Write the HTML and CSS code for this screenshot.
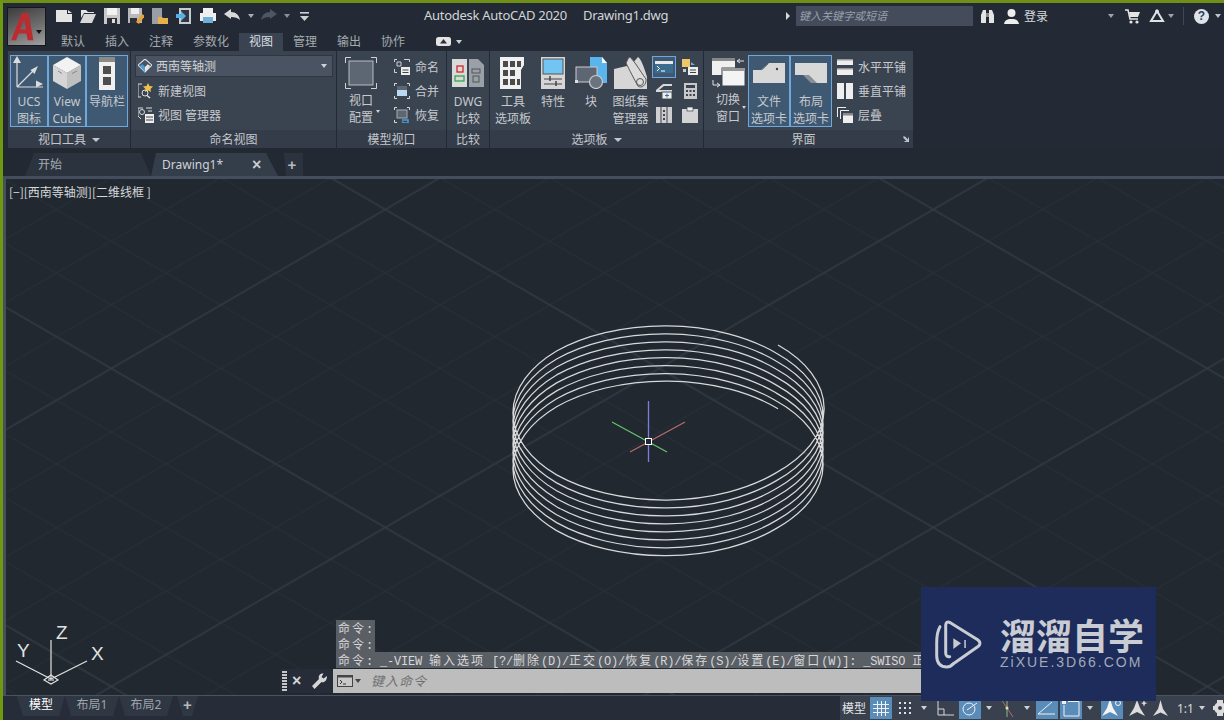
FILE: index.html
```html
<!DOCTYPE html>
<html lang="zh">
<head>
<meta charset="utf-8">
<title>Autodesk AutoCAD 2020</title>
<link rel="stylesheet" href="styles.css">
</head>
<body>
<div class="app">
  <header class="head">
    <button class="appbtn">
      <svg width="25" height="28" viewBox="0 0 30 34"><path d="M0 33 L13 0 H21 L27 33 H20 L18.5 25 H9 L6 33 Z M11 20 H18 L16 7 Z" fill="#bd2a30" fill-rule="evenodd"/></svg>
      <i class="caret appcaret"></i>
    </button>
    <div class="headcol">
      <div class="titlebar">
        <div class="qat">
          <svg width="16" height="16" viewBox="0 0 16 16"><path d="M0 2H11V6H16V14H0Z M12 2L16 5H12Z" fill="#e4e4e4"/></svg>
          <svg width="16" height="16" viewBox="0 0 16 16"><path d="M1 2H6L8 4H14V5H4L1 10Z" fill="#e4e4e4"/><path d="M4 6H16L12 15H0Z" fill="#d8d8d8"/></svg>
          <svg width="16" height="16" viewBox="0 0 16 16"><rect width="16" height="16" fill="#c9c9c9"/><rect x="3" width="10" height="7" fill="#f2f2f2"/><rect x="3" y="10" width="10" height="6" fill="#2a2f38"/><rect x="8" y="11" width="3" height="4" fill="#ddd"/></svg>
          <svg width="16" height="16" viewBox="0 0 16 16"><rect width="14" height="15" fill="#b9b9b9"/><rect x="3" width="8" height="6" fill="#efefef"/><rect x="2" y="10" width="7" height="5" fill="#2a2f38"/><path d="M8 14L14 6L17 8L11 16Z" fill="#e8a23a"/></svg>
          <svg width="16" height="16" viewBox="0 0 16 16"><rect x="0" y="0" width="10" height="16" fill="#9a9fa6"/><path d="M6 9H10L11 10H16V16H6Z" fill="#e6b04a"/></svg>
          <svg width="16" height="16" viewBox="0 0 16 16"><rect x="3" y="0" width="12" height="16" fill="#c6cbd0"/><rect x="5" y="2" width="8" height="12" fill="#2f3742"/><path d="M0 6H5V3L10 8L5 13V10H0Z" fill="#58b0e6"/></svg>
          <svg width="16" height="16" viewBox="0 0 16 16"><rect x="3" y="0" width="10" height="5" fill="#f0f0f0"/><rect x="0" y="5" width="16" height="8" fill="#eee"/><rect x="3" y="9" width="10" height="6" fill="#6fb0d8"/></svg>
          <svg width="17" height="16" viewBox="0 0 17 16"><path d="M0 6L7 1V4C12 4 15 7 16 12C14 10 11 9 7 9V11Z" fill="#d9d9d9"/></svg>
          <i class="caret qc1"></i>
          <svg class="redo" width="17" height="16" viewBox="0 0 17 16"><path d="M17 6L10 1V4C5 4 2 7 1 12C3 10 6 9 10 9V11Z" fill="#4d5663"/></svg>
          <i class="caret qc2"></i>
          <svg class="qmenu" width="9" height="9" viewBox="0 0 9 9"><rect y="0" width="9" height="1.6" fill="#cfcfcf"/><path d="M0 4H9L4.5 9Z" fill="#cfcfcf"/></svg>
        </div>
        <div class="title">Autodesk AutoCAD 2020<span class="docname">Drawing1.dwg</span></div>
        <div class="tbright">
          <i class="tri-right"></i>
          <div class="search">键入关键字或短语</div>
          <svg class="binoc" width="15" height="15" viewBox="0 0 15 15"><path d="M1 14V6L3 1H6V14Z M9 14V1H12L14 6V14Z" fill="#e4e4e4"/><rect x="6" y="4" width="3" height="4" fill="#8a8a8a"/></svg>
          <svg class="user" width="15" height="16" viewBox="0 0 15 16"><circle cx="7.5" cy="5" r="4" fill="#eee"/><path d="M0 16C1 11 5 11 7.5 11C10 11 14 11 15 16Z" fill="#eee"/></svg>
          <span class="login">登录</span>
          <i class="caret lc"></i>
          <svg class="cart" width="15" height="15" viewBox="0 0 15 15"><path d="M0 1H3L5 10H13" stroke="#e4e4e4" stroke-width="1.5" fill="none"/><path d="M4 3H15L13 8H5Z" fill="#e4e4e4"/><circle cx="6" cy="13" r="1.6" fill="#e4e4e4"/><circle cx="12" cy="13" r="1.6" fill="#e4e4e4"/></svg>
          <svg class="net" width="16" height="14" viewBox="0 0 16 14"><path d="M8 2L14 12H2Z" stroke="#dfe3e8" stroke-width="2" fill="none"/><circle cx="8" cy="2.5" r="2" fill="#dfe3e8"/></svg>
          <i class="caret nc"></i>
          <i class="divider"></i>
          <span class="help">?</span>
          <i class="caret hc"></i>
        </div>
      </div>
      <nav class="tabs">
        <span class="tab">默认</span><span class="tab">插入</span><span class="tab">注释</span><span class="tab">参数化</span><span class="tab on">视图</span><span class="tab">管理</span><span class="tab">输出</span><span class="tab">协作</span>
        <svg class="tabcam" width="15" height="9" viewBox="0 0 15 9"><rect width="15" height="9" rx="2.5" fill="#e4e4e4"/><path d="M7.5 2L11 6.5H4Z" fill="#2a303a"/></svg>
        <i class="caret tabc"></i>
      </nav>
    </div>
  </header>

  <section class="ribbon">
    <div class="panel p1">
      <div class="pbody">
        <div class="big hl w38">
          <div class="ico"><svg width="32" height="34" viewBox="0 0 32 34"><path d="M4 31V3M4 31L21 14M4 31H30" stroke="#dcdcdc" stroke-width="1.2" fill="none"/><path d="M4 0L8 7H0Z M30 28L23 31.5V24.5Z M25 10L21.5 18L17.5 14Z" fill="#dcdcdc" transform="translate(0 0)"/></svg></div>
          <div class="lab">UCS</div><div class="lab">图标</div>
        </div>
        <div class="big hl w38">
          <div class="ico"><svg width="30" height="34" viewBox="0 0 30 34"><path d="M15 1L29 9L15 17L1 9Z" fill="#f2f2f2"/><path d="M1 9L15 17V33L1 25Z" fill="#d5d5d5"/><path d="M29 9L15 17V33L29 25Z" fill="#bfbfbf"/><path d="M6 15L10 17.5M20 17.5L25 15" stroke="#888" stroke-width="1"/></svg></div>
          <div class="lab">View</div><div class="lab">Cube</div>
        </div>
        <div class="big hl w42">
          <div class="ico"><svg width="16" height="33" viewBox="0 0 16 33"><rect width="16" height="33" fill="#f0f0f0"/><rect width="16" height="5" fill="#8b8b86"/><rect x="4" y="9" width="8" height="8" fill="#4e4e4e"/><rect x="4" y="20" width="8" height="8" fill="#4e4e4e"/></svg></div>
          <div class="lab">导航栏</div>
        </div>
      </div>
      <div class="pfoot">视口工具<i class="caret fc"></i></div>
    </div>

    <div class="panel p2">
      <div class="pbody col">
        <div class="combo">
          <svg width="14" height="14" viewBox="0 0 16 16"><path d="M8 0L16 7L8 15L0 7Z" fill="none" stroke="#dfe3e8" stroke-width="1.2"/><path d="M2 8L8 15V9L5 6Z" fill="#4ba0dc"/><path d="M14 8L8 15V9L11 6Z" fill="#e6e6e6"/></svg>
          <span>西南等轴测</span><i class="caret cc"></i>
        </div>
        <div class="row r1">
          <svg width="16" height="16" viewBox="0 0 16 16"><path d="M4 1H0V14H3" stroke="#d8d8d8" fill="none"/><path d="M10 0L11.5 3L15 3.5L12.5 6L13 9L10 7.5L7 9L7.5 6L5 3.5L8.5 3Z" fill="#eec14a"/><circle cx="7" cy="10" r="3" stroke="#e0e0e0" fill="none"/><path d="M9 12.5L12 15" stroke="#e0e0e0" stroke-width="1.5"/></svg>
          <span>新建视图</span>
        </div>
        <div class="row r1">
          <svg width="16" height="16" viewBox="0 0 16 16"><path d="M5 1H0V9L3 12" stroke="#d8d8d8" fill="none"/><circle cx="4" cy="5" r="2.5" stroke="#d8d8d8" fill="none"/><rect x="7" y="7" width="9" height="9" fill="#eee"/><path d="M8 10H15M8 13H15" stroke="#444"/><path d="M8 1H14M10 4H14" stroke="#ddd"/></svg>
          <span>视图 管理器</span>
        </div>
      </div>
      <div class="pfoot">命名视图</div>
    </div>

    <div class="panel p3">
      <div class="pbody">
        <div class="big w42 rel">
          <div class="ico lift1"><svg width="32" height="32" viewBox="0 0 32 32"><rect x="4" y="4" width="24" height="24" fill="#5d6673" stroke="#b8bcc2"/><path d="M6 0.5H0.5V6M26 0.5H31.5V6M6 31.5H0.5V26M26 31.5H31.5V26" stroke="#cfd2d6" fill="none"/></svg></div>
          <div class="lab">视口</div><div class="lab">配置</div>
          <i class="caret bc"></i>
        </div>
        <div class="rows ml12">
          <div class="row r2"><svg width="16" height="16" viewBox="0 0 16 16"><path d="M3 .5H.5V3M10 .5H15.5V3M3 13.5H.5V10" stroke="#d0d0d0" fill="none"/><path d="M3 3H7V7H3Z" stroke="#d0d0d0" fill="none"/><rect x="7" y="8" width="9" height="8" fill="#eee"/><path d="M8.5 11H14.5M8.5 13.5H14.5" stroke="#444"/></svg><span>命名</span></div>
          <div class="row r2"><svg width="16" height="16" viewBox="0 0 16 16"><path d="M3 .5H.5V3M13 .5H15.5V3M3 15.5H.5V13M13 15.5H15.5V13" stroke="#d8d8d8" fill="none"/><rect x="3" y="3" width="10" height="10" fill="#b9d9f2"/><rect x="3" y="3" width="10" height="4" fill="#5d6673"/></svg><span>合并</span></div>
          <div class="row r2"><svg width="16" height="16" viewBox="0 0 16 16"><path d="M3 .5H.5V3M13 .5H15.5V3M3 15.5H.5V13" stroke="#d8d8d8" fill="none"/><rect x="3" y="3" width="10" height="8" fill="#5d6673" stroke="#aaa"/><path d="M8 13H14V16H10L8 14.5" stroke="#4ba0dc" stroke-width="1.5" fill="none"/></svg><span>恢复</span></div>
        </div>
      </div>
      <div class="pfoot">模型视口</div>
    </div>

    <div class="panel p4">
      <div class="pbody">
        <div class="big w42">
          <div class="ico"><svg width="32" height="28" viewBox="0 0 32 28"><rect x="0" y="0" width="15" height="28" fill="#d9d9d9"/><path d="M17 0H26L32 6V28H17Z" fill="#9aa0a8"/><rect x="5" y="7" width="6" height="6" fill="none" stroke="#d3262d" stroke-width="1.3"/><rect x="3" y="17" width="9" height="5" fill="none" stroke="#2ea84a" stroke-width="1.3"/><rect x="20" y="10" width="8" height="4" fill="none" stroke="#555"/><rect x="21" y="17" width="6" height="6" fill="none" stroke="#555"/></svg></div>
          <div class="lab">DWG</div><div class="lab">比较</div>
        </div>
      </div>
      <div class="pfoot">比较</div>
    </div>

    <div class="panel p5">
      <div class="pbody">
        <div class="big w38">
          <div class="ico"><svg width="26" height="32" viewBox="0 0 26 32"><path d="M0 0H24V8L21 13V32H0Z" fill="#f0f0f0"/><g fill="#4a4a4a"><rect x="3" y="4" width="5" height="6"/><rect x="10" y="4" width="5" height="6"/><rect x="17" y="4" width="4" height="6"/><rect x="3" y="13" width="5" height="6"/><rect x="10" y="13" width="5" height="6"/><rect x="3" y="22" width="5" height="6"/><rect x="10" y="22" width="5" height="6"/><rect x="17" y="22" width="3" height="6"/></g></svg></div>
          <div class="lab">工具</div><div class="lab">选项板</div>
        </div>
        <div class="big w42">
          <div class="ico"><svg width="24" height="32" viewBox="0 0 24 32"><rect width="24" height="32" fill="#d6d6d6"/><rect x="2" y="2" width="20" height="15" fill="#72c5f2" stroke="#555"/><path d="M3 22H21M3 27H21" stroke="#444"/><path d="M9 19V24M15 24V29" stroke="#444" stroke-width="1.5"/></svg></div>
          <div class="lab">特性</div>
        </div>
        <div class="big w34">
          <div class="ico"><svg width="32" height="32" viewBox="0 0 32 32"><path d="M15 0H27L32 6V26H15Z" fill="#5ab4ee"/><path d="M27 0V6H32Z" fill="#fff"/><rect x="1" y="10" width="21" height="15" fill="#5d6673" stroke="#ccc"/><circle cx="21" cy="25" r="6.5" fill="#6a7380" stroke="#ccc" stroke-width="1.2"/><rect x="0" y="23" width="3" height="3" fill="#ddd"/></svg></div>
          <div class="lab">块</div>
        </div>
        <div class="big w45">
          <div class="ico"><svg width="33" height="32" viewBox="0 0 33 32"><path d="M0 12L17 8L24 0C27 2 30 10 33 20V32H0Z" fill="#d6d6d6"/><path d="M15 0C18 0 26 14 32 22C33 28 27 32 24 29C21 24 15 12 12 6Z" fill="#dcdcdc" stroke="#555"/><circle cx="26" cy="25" r="3.5" fill="none" stroke="#555"/></svg></div>
          <div class="lab">图纸集</div><div class="lab">管理器</div>
        </div>
        <div class="smallgrid">
          <div class="sg hlbox"><svg width="18" height="12" viewBox="0 0 18 12"><rect width="18" height="12" fill="#e8e8e8"/><rect y="3" width="18" height="9" fill="#3b6d8f"/><path d="M2 5L4.5 7.5L2 10M6 10H10" stroke="#fff" fill="none"/></svg></div>
          <div class="sg"><svg width="16" height="16" viewBox="0 0 16 16"><rect x="0" y="0" width="8" height="8" fill="#eec66a"/><path d="M9 3L13 6H9Z" fill="#5ab4ee"/><rect x="6" y="8" width="10" height="8" fill="#eee"/><path d="M8 11H14M8 13.5H14" stroke="#444"/><path d="M1 10H4V13H1Z" fill="#ccc"/></svg></div>
          <div class="sg"><svg width="16" height="16" viewBox="0 0 16 16"><path d="M0 7L7 1H16V3H8L3 7H16V9H0Z" fill="#d8d8d8"/><rect x="6" y="9" width="10" height="7" fill="#eee" stroke="#555"/><path d="M9 12.5H13M11 10.5V14.5" stroke="#2a72b8"/></svg></div>
          <div class="sg"><svg width="13" height="16" viewBox="0 0 13 16"><rect width="13" height="16" fill="#c9c9c9"/><rect x="2" y="2" width="9" height="3" fill="#3c4450"/><g fill="#3c4450"><rect x="2" y="7" width="2" height="2"/><rect x="5.5" y="7" width="2" height="2"/><rect x="9" y="7" width="2" height="2"/><rect x="2" y="11" width="2" height="2"/><rect x="5.5" y="11" width="2" height="2"/><rect x="9" y="11" width="2" height="2"/></g></svg></div>
          <div class="sg"><svg width="16" height="16" viewBox="0 0 16 16"><rect width="16" height="16" fill="#cfcfcf"/><path d="M5 0V16M11 0V16" stroke="#3c4450"/><g fill="#3c4450"><rect x="7" y="3" width="2" height="2"/><rect x="7" y="7" width="2" height="2"/><rect x="7" y="11" width="2" height="2"/></g></svg></div>
          <div class="sg"><svg width="16" height="16" viewBox="0 0 16 16"><rect y="2" width="16" height="14" fill="#d4d4d4"/><rect x="5" y="0" width="6" height="4" fill="#efefef" stroke="#3c4450" stroke-width=".7"/></svg></div>
        </div>
      </div>
      <div class="pfoot">选项板<i class="caret fc"></i></div>
    </div>

    <div class="panel p6">
      <div class="pbody">
        <div class="big w38 rel">
          <div class="ico lift2"><svg width="33" height="30" viewBox="0 0 33 30"><rect x="0" y="0" width="23" height="17" fill="#f0f0f0"/><rect x="0" y="0" width="23" height="3" fill="#888"/><rect x="10" y="10" width="23" height="18" fill="#f4f4f4" stroke="#3c4450"/><rect x="10" y="10" width="23" height="3" fill="#999"/><path d="M32 3H26M28 1L25 3L28 5M1 22V27H7M5 25L8 27L5 29" stroke="#e0e0e0" fill="none"/></svg></div>
          <div class="lab">切换</div><div class="lab">窗口</div>
          <i class="caret bc2"></i>
        </div>
        <div class="big hl w42 ml1">
          <div class="ico"><svg width="32" height="20" viewBox="0 0 32 20"><path d="M0 20V7H9L16 0H32V20Z" fill="#d8d8d8"/><circle cx="24" cy="6" r="1.2" fill="#444"/><path d="M8 7L15 1" stroke="#777"/></svg></div>
          <div class="lab">文件</div><div class="lab">选项卡</div>
        </div>
        <div class="big hl w42">
          <div class="ico"><svg width="32" height="20" viewBox="0 0 32 20"><path d="M0 0H32V20H18L10 12H0Z" fill="#d8d8d8"/><path d="M8 12L16 20H22L14 12Z" fill="#8a8f96"/></svg></div>
          <div class="lab">布局</div><div class="lab">选项卡</div>
        </div>
        <div class="rows ml5">
          <div class="row r2"><svg width="16" height="16" viewBox="0 0 16 16"><rect y="0" width="16" height="6" fill="#eee"/><rect y="0" width="16" height="1.5" fill="#999"/><rect y="9" width="16" height="7" fill="#eee"/><rect y="9" width="16" height="1.5" fill="#999"/></svg><span>水平平铺</span></div>
          <div class="row r2"><svg width="16" height="16" viewBox="0 0 16 16"><rect x="0" width="7" height="16" fill="#eee"/><rect x="9" width="7" height="16" fill="#eee"/></svg><span>垂直平铺</span></div>
          <div class="row r2"><svg width="16" height="16" viewBox="0 0 16 16"><path d="M.5 10V.5H9M3.5 12V3.5H12" stroke="#eee" fill="none"/><rect x="6" y="6" width="10" height="10" fill="#eee"/><rect x="6" y="6" width="10" height="2.5" fill="#888"/></svg><span>层叠</span></div>
        </div>
      </div>
      <div class="pfoot f6">界面<svg class="launch" width="6" height="6" viewBox="0 0 6 6"><path d="M0 .5H2L5 3.5V1.5H6V6H1.5V5H3.5L.5 2Z" fill="#bfc3c8"/></svg></div>
    </div>
  </section>

  <div class="doctabs">
    <div class="dtab dt1">开始</div>
    <div class="dtab dt2"><span>Drawing1*</span><b class="dclose">×</b></div>
    <div class="dtab dt3">+</div>
  </div>

  <main class="viewport">
    <svg class="canvas" viewBox="6 179 1218 516" preserveAspectRatio="none">
      <defs>
        <pattern id="minor" width="109.6" height="63.6" patternUnits="userSpaceOnUse" patternTransform="translate(385.3 209.5)">
          <path d="M0 0L109.6 63.6M0 63.6L109.6 0" stroke="#272f39" stroke-width="1" fill="none"/>
        </pattern>
        <pattern id="major" width="548" height="318" patternUnits="userSpaceOnUse" patternTransform="translate(385.3 209.5)">
          <path d="M0 0L548 318M0 318L548 0" stroke="#333b46" stroke-width="1.2" fill="none"/>
        </pattern>
      </defs>
      <rect x="6" y="179" width="1218" height="516" fill="url(#minor)"/>
      <rect x="6" y="179" width="1218" height="516" fill="url(#major)"/>
      <path class="helix" d="M778 345.07
        a155 89 0 0 1 -2 127.82 a155 89 0 0 1 -219.4 1.99 a155 89 0 0 1 0 -123.84 a155 89 0 0 1 219.4 1.99
        a155 89 0 0 1 0 127.82 a155 89 0 0 1 -219.4 1.99 a155 89 0 0 1 0 -123.84 a155 89 0 0 1 219.4 1.99
        a155 89 0 0 1 0 127.82 a155 89 0 0 1 -219.4 1.99 a155 89 0 0 1 0 -123.84 a155 89 0 0 1 219.4 1.99
        a155 89 0 0 1 0 127.82 a155 89 0 0 1 -219.4 1.99 a155 89 0 0 1 0 -123.84 a155 89 0 0 1 219.4 1.99
        a155 89 0 0 1 0 127.82 a155 89 0 0 1 -219.4 1.99 a155 89 0 0 1 0 -123.84 a155 89 0 0 1 219.4 1.99
        a155 89 0 0 1 0 127.82 a155 89 0 0 1 -219.4 1.99 a155 89 0 0 1 0 -123.84 a155 89 0 0 1 219.4 1.99
        a155 89 0 0 1 0 127.82 a155 89 0 0 1 -219.4 1.99 a155 89 0 0 1 0 -123.84 a155 89 0 0 1 219.4 1.99
        a155 89 0 0 1 0 127.82 a155 89 0 0 1 -219.4 1.99 a155 89 0 0 1 0 -123.84 a155 89 0 0 1 221.4 1.99"/>
      <path d="M648.5 401V462" stroke="#7d7de0" stroke-width="1.3"/>
      <path d="M612 422L667 452" stroke="#62c46c" stroke-width="1.3"/>
      <path d="M685 422L630 452" stroke="#b86c6c" stroke-width="1.3"/>
      <rect x="645.500" y="438.500" width="6" height="6" fill="#212830" stroke="#fff" stroke-width="1"/>
      <g class="ucs">
        <path d="M51 679V640M51 679L16 661M51 679L87 661"/>
        <path d="M51 675L58 680L51 684L44 680Z"/>
        <path d="M48 680H54"/>
        <text x="56" y="639">Z</text>
        <text x="17" y="657">Y</text>
        <text x="91" y="660">X</text>
      </g>
    </svg>
    <div class="vplabel">[−][西南等轴测][二维线框 ]</div>
    <div class="cmd">
      <div class="hist">
        <div class="hline"><span class="cj">命令</span>:</div>
        <div class="hline"><span class="cj">命令</span>:</div>
        <div class="hline wide"><span class="cj">命令</span>: _-VIEW <span class="cj">输入选项</span> [?/<span class="cj">删除</span>(D)/<span class="cj">正交</span>(O)/<span class="cj">恢复</span>(R)/<span class="cj">保存</span>(S)/<span class="cj">设置</span>(E)/<span class="cj">窗口</span>(W)]: _SWISO <span class="cj">正</span></div>
      </div>
      <div class="cmdrow">
        <div class="cmdtools">
          <i class="grip"></i>
          <span class="cx">×</span>
          <svg class="wrench" width="15" height="16" viewBox="0 0 15 16"><path d="M15 3L11.5 5.5L9.5 4L11.5 0.5C8 0 6 3 7 6L0 13L2.5 16L9.5 9C12 10 15 8 15 3Z" fill="#d6d6d6"/></svg>
        </div>
        <div class="cmdinput">
          <svg width="16" height="12" viewBox="0 0 16 12"><rect x=".5" y=".5" width="15" height="11" fill="#c8c8c8" stroke="#444"/><rect x=".5" y=".5" width="15" height="2" fill="#444"/><path d="M3 5L5 7L3 9M6 9H9" stroke="#333" fill="none"/></svg>
          <i class="caret cmdcaret"></i>
          <span class="ph">键入命令</span>
        </div>
      </div>
    </div>
  </main>

  <footer class="status">
    <div class="stabs">
      <span class="stab first on">模型</span><span class="stab">布局1</span><span class="stab">布局2</span><span class="stab plus">+</span>
    </div>
    <div class="sright">
      <span class="smodel">模型</span>
      <span class="sb hl2 ml4"><svg width="16" height="16" viewBox="0 0 16 16"><path d="M0 4.5H16M0 8.5H16M0 12.5H16M4.5 1V16M8.5 1V16M12.5 1V16" stroke="#f0f0f0"/></svg></span>
      <svg class="ml6" width="14" height="14" viewBox="0 0 14 14"><g fill="#e0e0e0"><rect x="1" y="1" width="2" height="2"/><rect x="6" y="1" width="2" height="2"/><rect x="11" y="1" width="2" height="2"/><rect x="1" y="6" width="2" height="2"/><rect x="6" y="6" width="2" height="2"/><rect x="11" y="6" width="2" height="2"/><rect x="1" y="11" width="2" height="2"/><rect x="6" y="11" width="2" height="2"/><rect x="11" y="11" width="2" height="2"/></g></svg>
      <i class="caret ml9"></i>
      <svg class="ml10" width="17" height="16" viewBox="0 0 17 16"><path d="M1 0V15H17M1 9H7V15" stroke="#d8d8d8" fill="none"/></svg>
      <span class="sb hl2 ml5"><svg width="18" height="16" viewBox="0 0 18 16"><circle cx="8" cy="9" r="6" stroke="#f0f0f0" fill="none"/><path d="M6 10L16 3" stroke="#f0f0f0"/></svg></span>
      <i class="caret ml5"></i>
      <svg class="ml8" width="14" height="18" viewBox="0 0 14 18"><path d="M1 0L13 18" stroke="#b86c6c"/><path d="M7 0V18" stroke="#8fb88f"/><circle cx="7" cy="9" r="1.5" fill="#e4e4a0"/></svg>
      <i class="caret ml10"></i>
      <span class="sb hl2 ml6"><svg width="18" height="14" viewBox="0 0 18 14"><path d="M0 13H17M0 13L14 1" stroke="#f0f0f0" fill="none"/></svg></span>
      <span class="sb hl2 ml2"><svg width="18" height="17" viewBox="0 0 18 17"><path d="M6 1.500H17V16H2V5" stroke="#f0f0f0" fill="none"/><rect x="0" y="0" width="4" height="4" fill="#f0f0f0"/></svg></span>
      <i class="caret ml5"></i>
      <span class="sb hl2 ml8"><svg width="20" height="18" viewBox="0 0 20 18"><path d="M8 0L11 9L16 17L8 13L0 17L5 9Z" fill="#f4f4f4"/><circle cx="16" cy="4" r="2.5" fill="none" stroke="#f4f4f4"/></svg></span>
      <svg class="ml6" width="19" height="18" viewBox="0 0 19 18"><path d="M8 1L11 9L16 17L8 13L0 17L5 9Z" fill="#dcdcdc"/><path d="M15 1L16 3.500L18.500 4L16 5L15 7.500L14 5L12 4L14 3.500Z" fill="#dcdcdc"/></svg>
      <svg class="ml5" width="15" height="17" viewBox="0 0 15 17"><path d="M7.500 0L10 9L15 16L7.500 12.500L0 16L5 9Z" fill="#dcdcdc"/></svg>
      <span class="scale">1:1</span>
      <i class="caret ml6"></i>
      <svg class="ml6" width="14" height="16" viewBox="0 0 14 16"><circle cx="9" cy="8" r="6" fill="#dcdcdc"/><circle cx="9" cy="8" r="2" fill="#39414e"/><path d="M6 0H12V3H6ZM6 13H12V16H6ZM2 6H5V10H2Z" fill="#dcdcdc"/></svg>
    </div>
  </footer>

  <aside class="mark">
    <svg class="marklogo" width="48" height="52" viewBox="0 0 48 52">
      <path d="M14.700 36.700Q10.700 37 10.700 33V5Q11 1 15 2.500L43 20Q47 23.300 43 26.500L18 44" fill="none" stroke="#c9ccd2" stroke-width="3" stroke-linecap="round"/>
      <path d="M5 6.700Q1.700 12 1.700 23V36Q2 47 12 47Q15.500 47 18 44" fill="none" stroke="#c9ccd2" stroke-width="3" stroke-linecap="round"/>
      <path d="M18.300 18.300L26 23.300L18.300 29Z" fill="#c9ccd2"/>
      <rect x="29.300" y="20" width="1.500" height="8" fill="#c9ccd2"/>
    </svg>
    <div class="marktext">
      <div class="markcn">溜溜自学</div>
      <div class="markurl">ZiXUE.3D66.COM</div>
    </div>
  </aside>
</div>
</body>
</html>
```
FILE: styles.css
```css
* { box-sizing: border-box; }
html, body { margin: 0; padding: 0; }
body { width: 1224px; height: 720px; overflow: hidden; background: #222933; }
i { display: block; font-style: normal; }
svg { display: block; flex: none; }

.app {
  position: relative;
  width: 1224px;
  height: 720px;
  display: flex;
  flex-direction: column;
  border-top: 3px solid #6f8f17;
  border-left: 3px solid #6f9a0f;
  background: #232a35;
  color: #c6cace;
  font: 12px/17px "Noto Sans", "Noto Sans CJK SC", sans-serif;
  overflow: hidden;
}

.caret {
  width: 0;
  height: 0;
  flex: none;
  border-left: 3.5px solid transparent;
  border-right: 3.5px solid transparent;
  border-top: 4px solid #cdd0d4;
}

/* head */
.head { display: flex; height: 48px; padding-left: 4px; flex: none; }
.appbtn {
  position: relative;
  flex: none;
  width: 39px;
  height: 39px;
  margin-top: 4px;
  padding: 1px 0 0 3px;
  border: 1px solid #14171c;
  background: linear-gradient(160deg, #3c3c3c 0%, #6e6e6e 55%, #a0a0a0 100%);
}
.appcaret { position: absolute; right: 3px; top: 22px; border-top-color: #111; }
.headcol { flex: 1; min-width: 0; display: flex; flex-direction: column; }
.titlebar { display: flex; height: 26px; align-items: center; }
.qat { width: 378px; padding-left: 10px; display: flex; align-items: center; gap: 8px; flex: none; }
.qc1 { margin-left: -1px; border-top-color: #a9adb2; border-left-width: 3px; border-right-width: 3px; }
.redo { margin-left: -2px; }
.qc2 { margin-left: -1px; border-top-color: #8a9099; border-left-width: 3px; border-right-width: 3px; }
.qmenu { margin-left: 2px; }
.title { font-size: 13px; color: #d2d5d8; white-space: nowrap; letter-spacing: -0.28px; margin-top: -2px; }
.docname { margin-left: 16px; }
.tbright { margin-left: auto; width: 438px; display: flex; align-items: center; flex: none; }
.tri-right {
  width: 0; height: 0; flex: none; margin-right: 6px;
  border-top: 4px solid transparent; border-bottom: 4px solid transparent; border-left: 4px solid #d5d8dc;
}
.search {
  width: 177px; height: 20px; padding-left: 3px;
  background: #444c5c; color: #98a0ac; font-size: 11px; line-height: 20px; font-style: italic;
}
.binoc { margin-left: 7px; }
.user { margin-left: 9px; }
.login { margin-left: 5px; width: 24px; color: #d6d9dc; }
.lc { margin-left: 60px; border-top-color: #9ea3a9; }
.cart { margin-left: 11px; }
.net { margin-left: 9px; }
.nc { margin-left: 3px; border-top-color: #9ea3a9; }
.divider { margin-left: 9px; width: 1px; height: 18px; background: #3f4753; }
.help {
  margin-left: 10px; width: 15px; height: 15px; border-radius: 50%;
  background: #dfe3e8; color: #2a3f66; text-align: center; font: bold 12px/15px "Liberation Sans", sans-serif;
}
.hc { margin-left: 6px; border-top-color: #c0c3c8; }

.tabs { display: flex; height: 22px; padding-left: 5px; align-items: flex-end; }
.tab { height: 18px; padding: 0 10px; line-height: 17px; color: #a5aaaf; }
.tab.on { background: #3a4351; color: #dadde0; }
.tabcam { margin: 0 0 5px 21px; }
.tabc { margin: 0 0 7px 5px; }

/* ribbon */
.ribbon { display: flex; gap: 1px; height: 97px; margin-left: 5px; flex: none; }
.panel { display: flex; flex-direction: column; background: #3a4350; }
.p1 { width: 122px; }
.p2 { width: 205px; }
.p3 { width: 109px; }
.p4 { width: 42px; }
.p5 { width: 213px; }
.p6 { width: 209px; }
.pbody { height: 79px; padding-top: 4px; display: flex; flex: none; }
.pbody.col { flex-direction: column; padding-left: 4px; }
.p1 .pbody { padding-left: 2px; }
.p3 .pbody { padding-left: 3px; }
.p5 .pbody { padding-left: 4px; }
.p6 .pbody { padding-left: 5px; }
.pfoot {
  position: relative;
  height: 18px; padding-top: 2px; display: flex; justify-content: center; align-items: center; gap: 6px;
  background: #343c49; color: #c3c7cc; line-height: 16px;
}
.f6 { padding-right: 10px; }
.launch { position: absolute; right: 4px; bottom: 6px; }
.fc { border-top-color: #c3c7cc; border-left-width: 4px; border-right-width: 4px; }

.big { height: 72px; border: 1px solid transparent; display: flex; flex-direction: column; align-items: center; flex: none; overflow: hidden; }
.big.hl { border-color: #6ea8dc; background: #3f5972; }
.rel { position: relative; }
.ico { height: 37px; display: flex; align-items: center; justify-content: center; flex: none; padding-bottom: 3px; }
.lift1 { height: 36px; padding-bottom: 2px; }
.lift2 { height: 35px; padding-bottom: 1px; }
.lab { line-height: 17px; height: 17px; white-space: nowrap; flex: none; }
.w34 { width: 34px; }
.w38 { width: 38px; }
.w42 { width: 42px; }
.w45 { width: 45px; }
.bc { position: absolute; right: 1px; top: 54px; border-left-width: 2.5px; border-right-width: 2.5px; border-top-width: 3px; }
.bc2 { position: absolute; right: 0; top: 50px; border-left-width: 2.5px; border-right-width: 2.5px; border-top-width: 3px; }

.combo {
  width: 198px; height: 22px; padding: 0 4px 0 2px; display: flex; align-items: center; gap: 4px;
  background: #4a5362; border: 1px solid #2f3641; color: #d0d3d7;
}
.cc { margin-left: auto; margin-right: 1px; }
.row { display: flex; align-items: center; height: 24px; white-space: nowrap; }
.r1 { gap: 4px; padding-left: 3px; }
.combo + .row { margin-top: 2px; }
.r2 { gap: 5px; }
.rows { display: flex; flex-direction: column; }
.ml12 { margin-left: 12px; }
.ml1 { margin-left: 1px; }
.smallgrid { display: grid; grid-template-columns: 24px 20px; grid-auto-rows: 24px; column-gap: 4px; height: 72px; margin-left: -1px; }
.sg { display: flex; align-items: center; justify-content: center; }
.sg.hlbox { border: 1px solid #6ea8dc; background: #3f5972; height: 22px; margin-top: 1px; }

/* document tabs */
.doctabs {
  display: flex; height: 28px; padding: 5px 0 0 22px; flex: none; background: #222933;
}
.dtab { height: 23px; display: flex; align-items: center; }
.dt1 {
  width: 126px; padding-left: 13px; background: #2b333f; color: #a5aaaf;
  clip-path: polygon(9px 0, calc(100% - 10px) 0, 100% 100%, 0 100%);
}
.dt2 {
  width: 127px; padding-left: 11px; background: #343d4a; color: #cfd2d6;
  clip-path: polygon(5px 0, calc(100% - 12px) 0, 100% 100%, 0 100%);
}
.dt2 span { width: 90px; }
.dclose { color: #c8ccd0; font: bold 16px/16px "Liberation Sans", sans-serif; }
.dt3 {
  width: 22px; margin-left: 3px; justify-content: center; background: #2b333f; color: #b5b9be;
  font: bold 15px/20px "Liberation Sans", sans-serif;
  clip-path: polygon(3px 0, 100% 0, 100% 100%, 5px 100%);
}

/* viewport */
.viewport {
  position: relative;
  flex: 1;
  min-height: 0;
  background: #212830;
  border-top: 3px solid #444d5d;
  border-left: 3px solid #46505c;
}
.canvas { position: absolute; left: 0; top: 0; width: 100%; height: 100%; }
.helix { fill: none; stroke: #d8d8d8; stroke-width: 1.25; }
.ucs path { fill: none; stroke: #e2e2e2; stroke-width: 1.2; }
.ucs text { fill: #e2e2e2; font: 19px "Liberation Sans", sans-serif; }
.vplabel {
  position: absolute; left: 3px; top: 4px; color: #d6d8da; font-size: 12px; line-height: 17px;
  font-family: "Noto Sans CJK SC", sans-serif; white-space: nowrap;
}
.cmd { position: absolute; left: 274px; bottom: 2px; width: 641px; }
.hist { margin-left: 56px; display: flex; flex-direction: column; align-items: flex-start; }
.hline {
  height: 16px; padding: 0 2px; background: #5a5f66; color: #d8d8d8;
  font: 12px/15px "Liberation Mono", "Noto Sans CJK SC", monospace; white-space: pre; letter-spacing: -0.2px;
}
.hline.wide { width: 585px; }
.cj { display: inline-block; height: 15px; font-size: 12px; line-height: 15px; letter-spacing: 2px; font-family: "Noto Sans CJK SC", sans-serif; }
.cmdrow { display: flex; height: 24px; margin-top: 1px; }
.cmdtools { width: 53px; display: flex; align-items: center; background: #262d38; flex: none; padding-left: 2px; }
.grip {
  width: 5px; height: 20px;
  background: repeating-linear-gradient(#c8c8c8 0 2px, transparent 2px 3px);
}
.cx { margin-left: 5px; color: #d6d6d6; font: bold 16px/16px "Liberation Sans", sans-serif; width: 10px; }
.wrench { margin-left: 10px; }
.cmdinput { flex: 1; display: flex; align-items: center; padding-left: 4px; background: #bdbdbd; }
.cmdcaret { margin-left: 2px; border-top-color: #444; }
.ph { margin-left: 10px; color: #707070; font-size: 13px; font-style: italic; letter-spacing: 1px; }

/* status bar */
.status {
  height: 25px; flex: none; display: flex; background: #262d38; border-top: 1px solid #4a5360;
}
.stabs { display: flex; padding-left: 14px; align-items: flex-start; }
.stab {
  height: 20px; width: 54px; text-align: center; line-height: 18px; color: #a0a5ab;
  background: #2f3743;
  clip-path: polygon(0 0, 100% 0, calc(100% - 6px) 100%, 6px 100%);
}
.stab.first { width: 48px; }
.stab.on { color: #fff; background: #303844; }
.stab.plus { width: 21px; margin-left: 4px; font: bold 15px/17px "Liberation Sans", sans-serif; color: #b5b9be; }
.sright {
  margin-left: auto; width: 384px; display: flex; align-items: center; background: #39414e; padding-left: 2px; flex: none;
}
.smodel { color: #e2e4e6; width: 24px; flex: none; }
.sb { width: 22px; height: 22px; display: flex; align-items: center; justify-content: center; flex: none; }
.hl2 { background: #5a8cb9; }
.scale { margin-left: 9px; width: 16px; color: #d8dadd; flex: none; }
.ml2 { margin-left: 2px; }
.ml4 { margin-left: 4px; }
.ml5 { margin-left: 5px; }
.ml6 { margin-left: 6px; }
.ml8 { margin-left: 8px; }
.ml9 { margin-left: 9px; }
.ml10 { margin-left: 10px; }

/* watermark */
.mark {
  position: absolute; left: 918px; top: 584px; width: 235px; height: 114px;
  background: #1d2c5a; display: flex; align-items: flex-start; padding: 33px 0 0 14px;
}
.marktext { margin-left: 17px; margin-top: -4px; }
.markcn {
  color: #c9ccd2; font: bold 36px/36px "Noto Sans CJK SC", sans-serif; white-space: nowrap;
}
.markurl {
  margin-top: 2px; color: #a3a9b8; font: 14px/16px "Liberation Sans", sans-serif; letter-spacing: 2px; white-space: nowrap;
}
```
